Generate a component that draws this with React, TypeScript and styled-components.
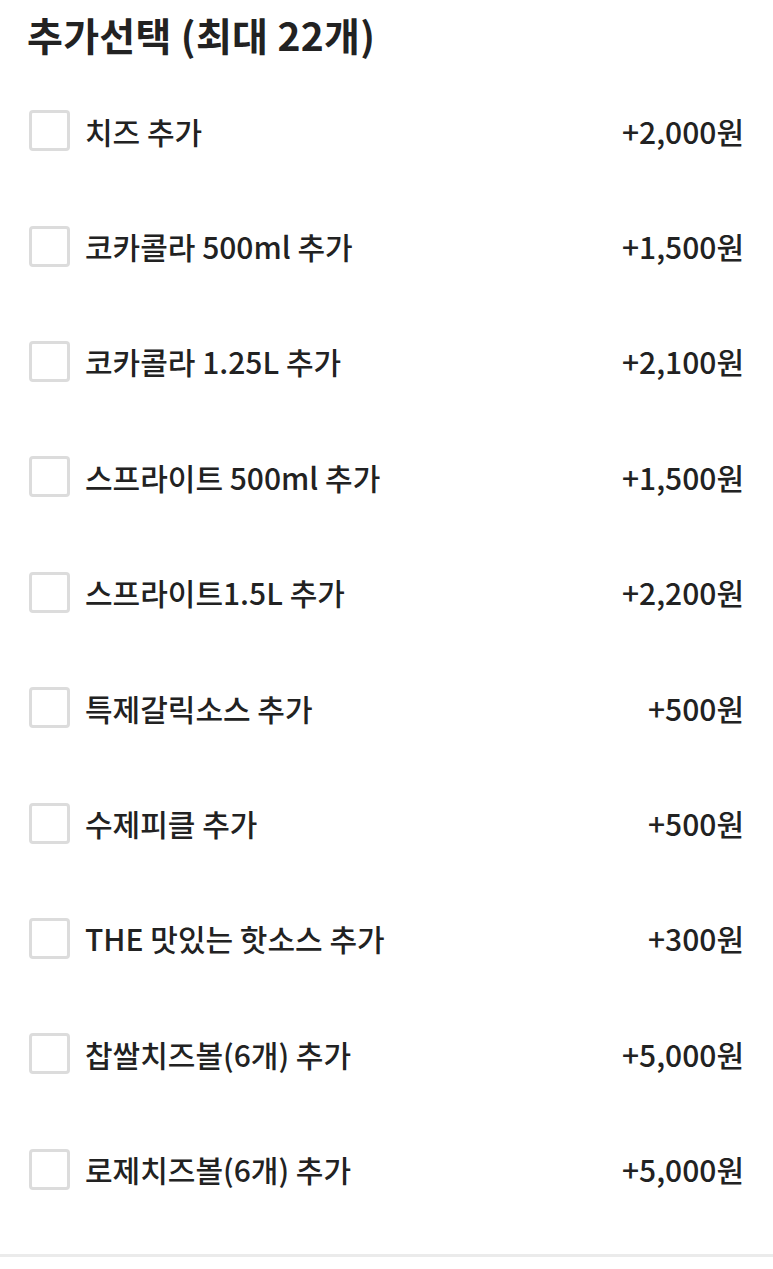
import React, { FC } from 'react';
import styled, { createGlobalStyle } from 'styled-components';

const GlobalStyle = createGlobalStyle`
  html, body {
    margin: 0;
    padding: 0;
    background: #fff;
  }
  body {
    font-family: "Noto Sans CJK KR", "Noto Sans", sans-serif;
    color: #222;
  }
`

const OptionWrap = styled.section`
  width: 773px;
  background: #fff;
`

const Title = styled.h2`
  margin: 0;
  height: 68px;
  padding: 0 27px;
  display: flex;
  align-items: center;
  font-size: 39px;
  font-weight: 700;
  letter-spacing: 0.3px;
  color: #222;
`

const OptionList = styled.ul`
  list-style: none;
  margin: 0;
  padding: 5px 29px 27px;
  border-bottom: 3px solid #ebebeb;
`

const OptionRow = styled.li`
  height: 115.4px;
  display: flex;
  align-items: center;
`

const CheckBox = styled.span`
  box-sizing: border-box;
  width: 41px;
  height: 41px;
  flex: none;
  border: 3px solid #dcdcdc;
  border-radius: 4px;
  background: #fff;
`

const OptionName = styled.span`
  flex: 1;
  margin-left: 15px;
  font-size: 30px;
  font-weight: 500;
  color: #222;
`

const OptionPrice = styled.span`
  font-size: 30px;
  font-weight: 500;
  color: #222;
`

const options = [
  { name: '치즈 추가', price: 2000 },
  { name: '코카콜라 500ml 추가', price: 1500 },
  { name: '코카콜라 1.25L 추가', price: 2100 },
  { name: '스프라이트 500ml 추가', price: 1500 },
  { name: '스프라이트1.5L 추가', price: 2200 },
  { name: '특제갈릭소스 추가', price: 500 },
  { name: '수제피클 추가', price: 500 },
  { name: 'THE 맛있는 핫소스 추가', price: 300 },
  { name: '찹쌀치즈볼(6개) 추가', price: 5000 },
  { name: '로제치즈볼(6개) 추가', price: 5000 },
]

const App: FC = () => {
  return (
    <OptionWrap>
      <GlobalStyle />
      <Title>추가선택 (최대 22개)</Title>
      <OptionList>
        {options.map((item) => (
          <OptionRow key={item.name}>
            <CheckBox />
            <OptionName>{item.name}</OptionName>
            <OptionPrice>+{item.price.toLocaleString('ko-KR')}원</OptionPrice>
          </OptionRow>
        ))}
      </OptionList>
    </OptionWrap>
  );
};

export default App;
